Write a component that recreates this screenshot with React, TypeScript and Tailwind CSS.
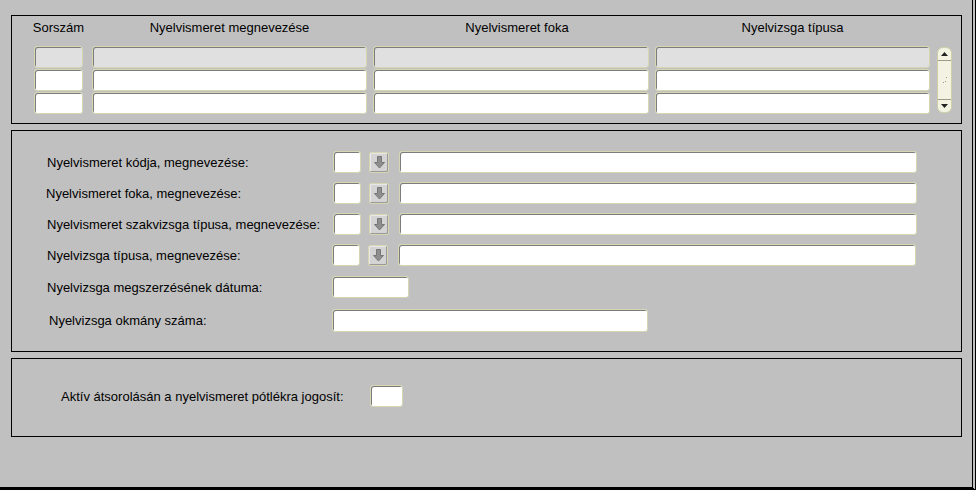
import React from "react";

const field =
  "h-[22px] rounded-[3px] border border-[#d6d6b2] shadow-[inset_1px_1px_0_#7c7c7c]";

const LookupButton: React.FC = () => (
  <div className="flex h-[21px] w-[20px] items-center justify-center rounded-[2px] border border-[#d6d6b2] bg-[#d4d4d4] shadow-[inset_-1px_-1px_0_#9a9a9a,inset_1px_1px_0_#e8e8e8]">
    <svg width="13" height="14" viewBox="0 0 13 14">
      <path d="M4.5 1.5h4v6h3l-5 5.5-5-5.5h3z" fill="#8e8e8e" stroke="#767676" strokeWidth="1" />
    </svg>
  </div>
);

const Scrollbar: React.FC = () => (
  <div className="ml-[7px] mt-[1px] flex h-[66px] w-[15px] flex-col items-center rounded-[6px] border border-[#cfcfa8] bg-[#f3f3e3]">
    <div className="flex h-[13px] w-full items-center justify-center border-b border-[#9c9c88]">
      <svg width="7" height="4" viewBox="0 0 7 4">
        <path d="M0 4h7L3.5 0z" fill="#222" />
      </svg>
    </div>
    <div className="flex flex-1 items-center justify-center">
      <svg width="6" height="8" viewBox="0 0 6 8">
        <rect x="4" y="1" width="1" height="1" fill="#9a9a8a" />
        <rect x="1" y="6" width="1" height="1" fill="#9a9a8a" />
        <rect x="3" y="5" width="1" height="1" fill="#9a9a8a" />
      </svg>
    </div>
    <div className="flex h-[13px] w-full items-center justify-center border-t border-[#9c9c88]">
      <svg width="7" height="4" viewBox="0 0 7 4">
        <path d="M0 0h7L3.5 4z" fill="#222" />
      </svg>
    </div>
  </div>
);

const TableRow: React.FC<{ active?: boolean }> = ({ active }) => {
  const bg = active ? "bg-[#e0e0e0]" : "bg-white";
  return (
    <div className="flex">
      <div className={`${field} ${bg} w-[49px]`} />
      <div className={`${field} ${bg} ml-[9px] w-[275px]`} />
      <div className={`${field} ${bg} ml-[6px] w-[276px]`} />
      <div className={`${field} ${bg} ml-[6px] w-[275px]`} />
    </div>
  );
};

const LookupRow: React.FC<{ label: string; labelClass: string }> = ({ label, labelClass }) => (
  <div className="flex items-center">
    <div className={`whitespace-nowrap ${labelClass}`}>{label}</div>
    <div className={`${field} bg-white w-[28px]`} />
    <div className="ml-[8px]">
      <LookupButton />
    </div>
    <div className={`${field} bg-white ml-[10px] w-[518px]`} />
  </div>
);

export default function App() {
  return (
    <div
      className="flex h-[490px] w-[976px] flex-col gap-[6px] border-r-4 border-b-[3px] border-double border-black [border-bottom-style:solid] bg-[#c0c0c0] pl-[11px] pt-[15px] text-[13px] leading-[15px] text-black"
      style={{ fontFamily: '"Liberation Sans", Arial, sans-serif' }}
    >
      {/* list block */}
      <div className="h-[109px] w-[951px] border border-black pl-[22px] pt-[4px]">
        <div className="flex h-[15px]">
          <div className="flex w-[49px] justify-center whitespace-nowrap">Sorszám</div>
          <div className="ml-[9px] flex w-[275px] justify-center whitespace-nowrap">Nyelvismeret megnevezése</div>
          <div className="ml-[6px] flex w-[276px] justify-center whitespace-nowrap pl-[12px]">Nyelvismeret foka</div>
          <div className="ml-[6px] flex w-[275px] justify-center whitespace-nowrap">Nyelvizsga típusa</div>
        </div>
        <div className="mt-[11px] flex">
          <div className="flex flex-col gap-[1px]">
            <TableRow active />
            <TableRow />
            <TableRow />
          </div>
          <Scrollbar />
        </div>
      </div>

      {/* detail block */}
      <div className="flex h-[222px] w-[951px] flex-col border border-black pl-[35px] pt-[20px]">
        <div className="flex flex-col gap-[9px]">
          <LookupRow label="Nyelvismeret kódja, megnevezése:" labelClass="w-[286px]" />
          <LookupRow label="Nyelvismeret foka, megnevezése:" labelClass="-ml-[1px] w-[287px]" />
          <LookupRow label="Nyelvismeret szakvizsga típusa, megnevezése:" labelClass="w-[286px]" />
          <LookupRow label="Nyelvizsga típusa, megnevezése:" labelClass="w-[285px]" />
        </div>
        <div className="mt-[10px] flex items-center">
          <div className="w-[285px] whitespace-nowrap">Nyelvizsga megszerzésének dátuma:</div>
          <div className={`${field} bg-white w-[77px]`} />
        </div>
        <div className="mt-[11px] flex items-center">
          <div className="ml-[2px] w-[283px] whitespace-nowrap">Nyelvizsga okmány száma:</div>
          <div className={`${field} bg-white h-[23px] w-[316px]`} />
        </div>
      </div>

      {/* flag block */}
      <div className="h-[79px] w-[951px] border border-black pl-[49px] pt-[26px]">
        <div className="flex items-center">
          <div className="w-[309px] whitespace-nowrap">Aktív átsorolásán a nyelvismeret pótlékra jogosít:</div>
          <div className={`${field} bg-white w-[33px]`} />
        </div>
      </div>
    </div>
  );
}
